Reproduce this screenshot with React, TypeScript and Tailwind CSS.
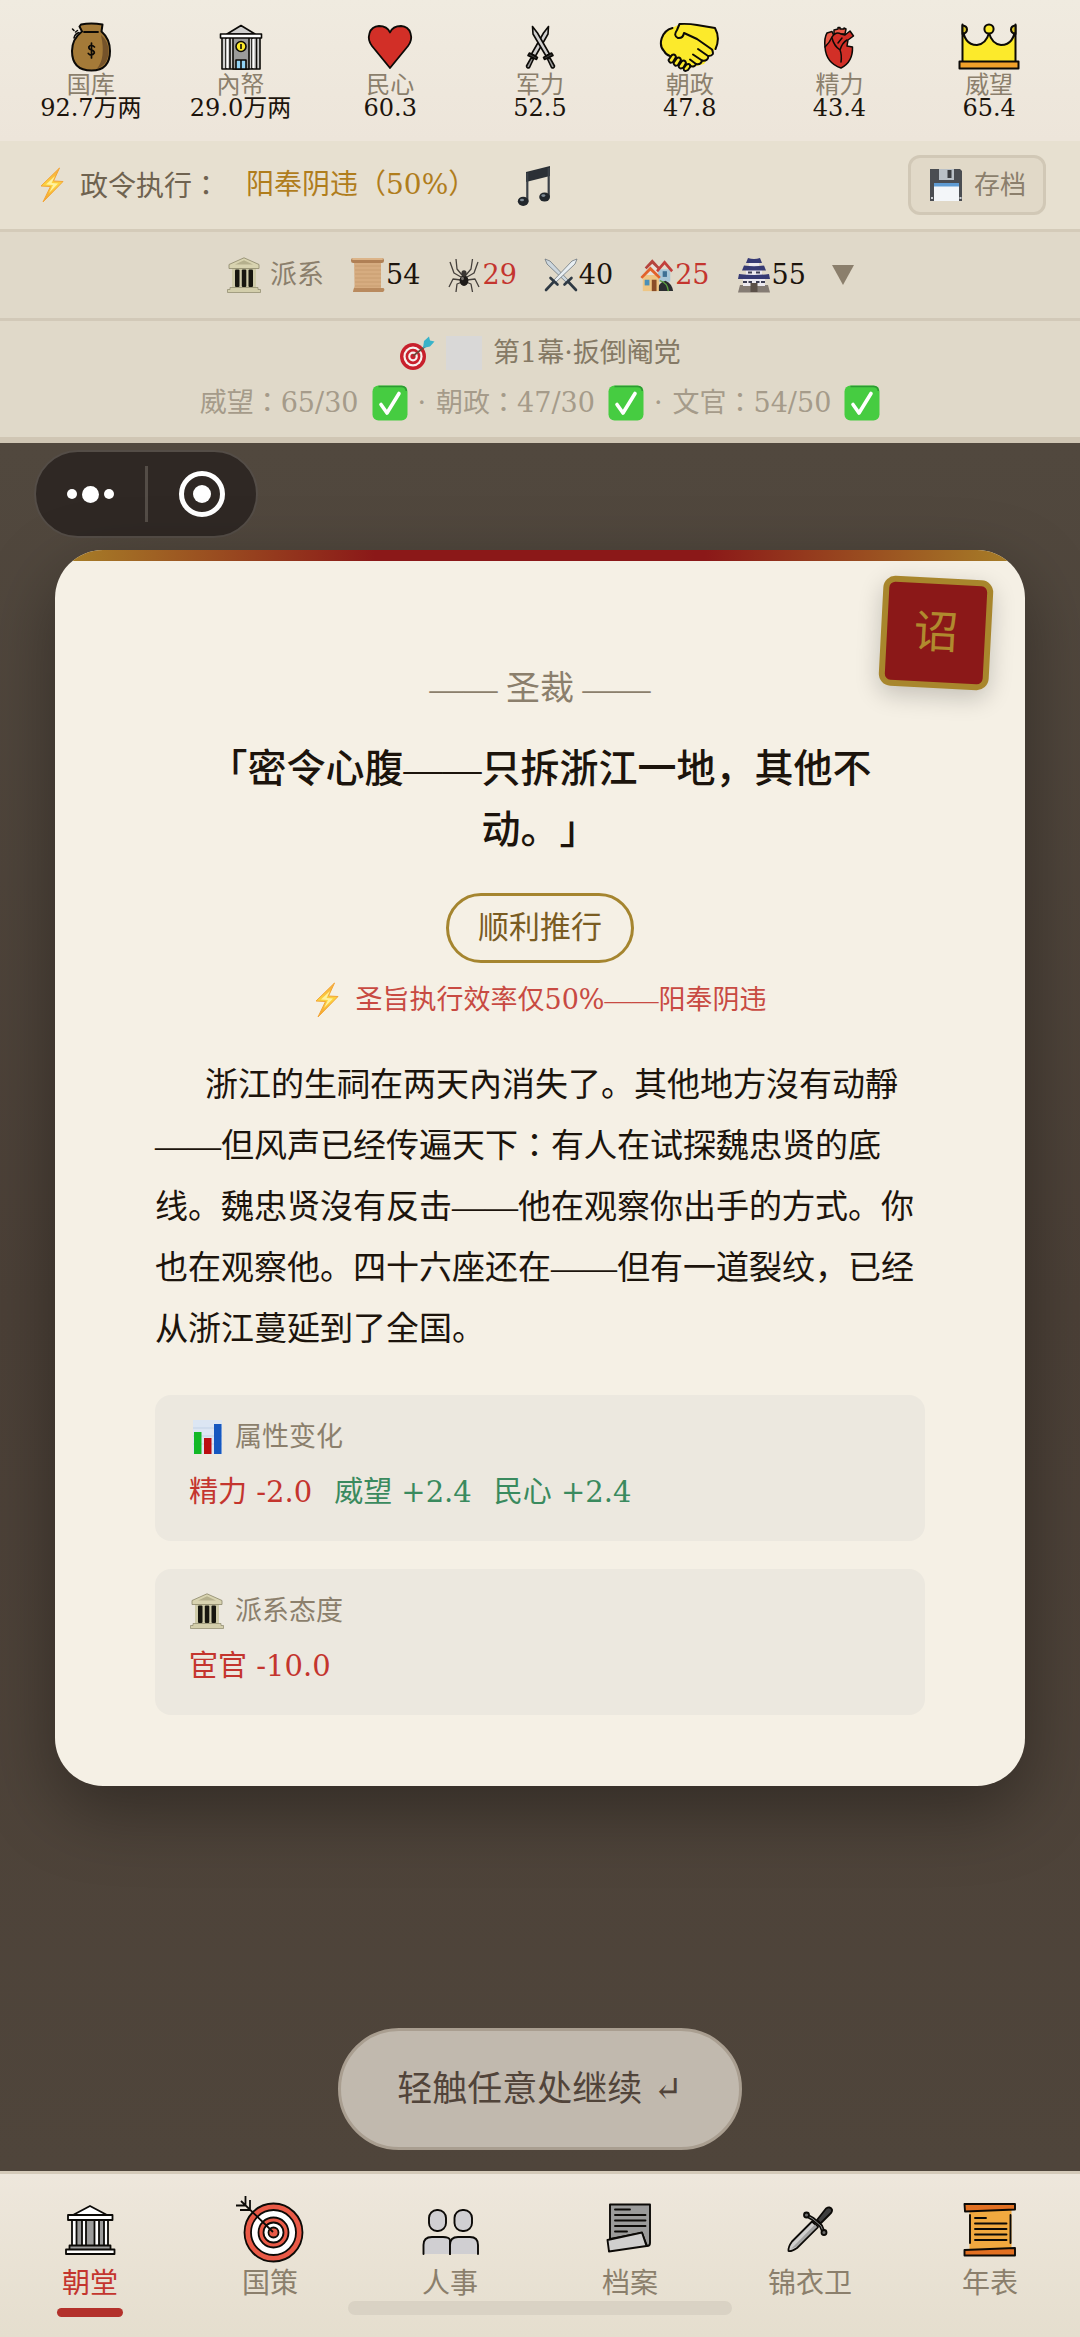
import { useState } from "react";
import type { ReactNode } from "react";

type Stat = {
  name: string;
  value: string;
  icon: ReactNode;
};

type Faction = {
  id: string;
  value: number;
  low?: boolean;
  icon: ReactNode;
};

type Goal = {
  name: string;
  progress: string;
};

type Change = {
  name: string;
  amount: string;
};

type Tab = {
  id: string;
  name: string;
  icon: ReactNode;
};

/* ---------- Emoji style icons ---------- */

function BoltIcon() {
  return (
    <svg viewBox="0 0 28 36" className="h-9 w-7 shrink-0" aria-hidden="true">
      <defs>
        <linearGradient id="bolt" x1="0" y1="0" x2="0" y2="1">
          <stop offset="0" stopColor="#f7a93b" />
          <stop offset="0.5" stopColor="#fcd53f" />
          <stop offset="1" stopColor="#f59f2c" />
        </linearGradient>
      </defs>
      <path
        d="M21.5 1 L3 19 L12.5 19.5 L5 35 L25 14.5 L15.5 14 Z"
        fill="url(#bolt)"
        stroke="#f3a536"
        strokeWidth="1"
        strokeLinejoin="round"
      />
      <path d="M17 9 L8 17.5 L15 18 L11 26 L20 16.5 L13.5 16 Z" fill="#fff2a0" />
    </svg>
  );
}

function MusicIcon() {
  return (
    <svg viewBox="0 0 36 44" className="h-11 w-9" aria-hidden="true">
      <path d="M10 9 L34 3 V13 L10 19 Z" fill="#2b3036" />
      <path d="M11.3 10 V38 M32.7 5 V34" stroke="#3b4148" strokeWidth="2.2" />
      <ellipse cx="7.2" cy="38.3" rx="5.4" ry="4.6" fill="#22272c" />
      <ellipse cx="28.6" cy="34" rx="5.4" ry="4.6" fill="#22272c" />
      <ellipse cx="6" cy="37" rx="2" ry="1.3" fill="#7e8a94" />
      <ellipse cx="27.4" cy="32.6" rx="2" ry="1.3" fill="#7e8a94" />
    </svg>
  );
}

function FloppyIcon() {
  return (
    <svg viewBox="0 0 36 36" className="size-9" aria-hidden="true">
      <path d="M2 2 H32 L34 4 V34 H2 Z" fill="#4a4d52" />
      <rect x="11" y="2" width="15" height="11" fill="#b9c0c6" />
      <rect x="19.5" y="3" width="4" height="8" fill="#3a3d41" />
      <rect x="6" y="16" width="25" height="18" fill="#f3f6f9" />
      <rect x="6" y="16" width="25" height="3.5" fill="#5e9bd3" />
      <rect x="3" y="30" width="2" height="2" fill="#c9cdd1" />
      <rect x="31.5" y="30" width="2" height="2" fill="#c9cdd1" />
    </svg>
  );
}

function TempleIcon() {
  return (
    <svg viewBox="0 0 36 36" className="size-9 shrink-0" aria-hidden="true">
      <rect x="6" y="11" width="24" height="20" fill="#cfcba9" />
      <path d="M18 0.8 L33 7.5 V11.5 H3 V7.5 Z" fill="#d8d3b0" stroke="#8b876a" strokeWidth="0.8" />
      <path d="M18 3.2 L27 7.6 H9 Z" fill="#b5b08d" />
      <rect x="9" y="12.5" width="4.5" height="17.5" rx="1" fill="#17160f" />
      <rect x="15.8" y="12.5" width="4.5" height="17.5" rx="1" fill="#17160f" />
      <rect x="22.5" y="12.5" width="4.5" height="17.5" rx="1" fill="#17160f" />
      <path d="M4 30.5 H32 V32.5 H34.5 V35.5 H1.5 V32.5 H4 Z" fill="#d3ceab" stroke="#8b876a" strokeWidth="0.7" />
    </svg>
  );
}

function ParchmentIcon() {
  return (
    <svg viewBox="0 0 36 36" className="size-9" aria-hidden="true">
      <path d="M4 3 H31 V31 L33 35 H3 L4.5 29 Z" fill="#d6ac80" />
      <path d="M5 9 H31 M5 13 H31 M5 17 H31 M5 21 H31 M5 25 H31 M5 29 H31" stroke="#c59a6d" strokeWidth="0.8" />
      <rect x="1" y="1" width="33" height="5" rx="2.2" fill="#b08055" />
      <rect x="2" y="1" width="31" height="2" rx="1" fill="#dcb488" />
      <path d="M3 35 L4 31 H33.5 Q35.5 33 33 35 Z" fill="#b98a5e" />
    </svg>
  );
}

function SpiderIcon() {
  return (
    <svg viewBox="0 0 36 36" className="size-9" aria-hidden="true">
      <g fill="none" stroke="#45403c" strokeWidth="1.3" strokeLinejoin="round">
        <path d="M16 18 L11 12 L10 2 M20 18 L25 12 L26.5 2" />
        <path d="M15 20 L8 16 L4 5 M21 20 L28 16 L32 5" />
        <path d="M15 23 L7 22 L3 30 M21 23 L29 22 L33 30" />
        <path d="M16 25 L11 27 L10 35 M20 25 L25 27 L26.5 35" />
      </g>
      <ellipse cx="18" cy="23.5" rx="4.4" ry="5.4" fill="#1d1a18" />
      <ellipse cx="18" cy="16.5" rx="2.6" ry="3.2" fill="#3a3633" />
      <ellipse cx="16.5" cy="21.5" rx="1.4" ry="1.8" fill="#77716c" />
    </svg>
  );
}

function CrossedBladesIcon() {
  return (
    <svg viewBox="0 0 36 36" className="size-9" aria-hidden="true">
      <path d="M2 2 L7 4 L26 24 L24 26 L4 7 Z" fill="#cdd7de" stroke="#6d777f" strokeWidth="0.8" />
      <path d="M34 2 L29 4 L10 24 L12 26 L32 7 Z" fill="#e8eef2" stroke="#6d777f" strokeWidth="0.8" />
      <path
        d="M21.5 27.5 L28.5 21 M25.5 25 L33 33 M14.5 27.5 L7.5 21 M10.5 25 L3 33"
        stroke="#2f3a44"
        strokeWidth="2.6"
        strokeLinecap="round"
      />
    </svg>
  );
}

function HousesIcon() {
  return (
    <svg viewBox="0 0 38 36" className="h-9 w-9" aria-hidden="true">
      <rect x="9" y="7" width="12" height="14" fill="#e6e1da" />
      <path d="M6 10 L14 1.5 L22 10 L20 12 L14 6 L8 12 Z" fill="#b5443d" />
      <rect x="20" y="12" width="13" height="13" fill="#a8c6d8" />
      <path d="M18 13 L27 2.5 L36 13 L34 15 L27 7 L20 15 Z" fill="#c23f3b" />
      <rect x="25" y="14" width="4.5" height="6" fill="#3d6f94" />
      <path d="M19 35 Q20 26 28 24 Q35 27 36 35 Z" fill="#2b2d30" />
      <path d="M22 24 Q30 26 31 35" stroke="#5aa041" strokeWidth="1.4" fill="none" />
      <rect x="4" y="18" width="17" height="17" fill="#eec685" />
      <path d="M1.5 20 L12 9 L23 20 L21 22 L12 13.5 L3.5 22 Z" fill="#e2622b" />
      <rect x="6" y="23" width="5" height="6" fill="#4a90b8" />
      <rect x="13.5" y="23" width="5" height="12" fill="#8a4d28" />
    </svg>
  );
}

function CastleIcon() {
  return (
    <svg viewBox="0 0 36 36" className="size-9" aria-hidden="true">
      <path d="M4 28 H32 L34 35.5 H2 Z" fill="#857c74" />
      <rect x="7" y="20" width="22" height="9" fill="#ece9ef" />
      <rect x="10" y="12" width="16" height="7" fill="#ece9ef" />
      <rect x="13" y="5" width="10" height="6" fill="#ece9ef" />
      <path
        d="M12 1 Q18 3 24 1 L26 6 H10 Z M8 8.5 Q18 10 28 8.5 L30 13.5 H6 Z M3 17 Q18 19 33 17 L34 22 H2 Z"
        fill="#363a74"
      />
      <path d="M7 25 H11 M12.5 25 H16 M20 25 H23.5 M25 25 H29 M12 15.5 H16 M20 15.5 H24" stroke="#3c3d52" strokeWidth="2" />
      <rect x="14.5" y="26" width="7" height="9" fill="#5b5048" />
    </svg>
  );
}

function DartboardIcon() {
  return (
    <svg viewBox="0 0 36 36" className="size-9" aria-hidden="true">
      <ellipse cx="14" cy="21.5" rx="13" ry="13.5" fill="#c8202c" />
      <ellipse cx="14" cy="21.5" rx="9.6" ry="10" fill="#f7f1ef" />
      <ellipse cx="14" cy="21.5" rx="7.4" ry="7.8" fill="#c8202c" />
      <ellipse cx="14" cy="21.5" rx="4.8" ry="5" fill="#f7f1ef" />
      <ellipse cx="14" cy="21.5" rx="2.6" ry="2.8" fill="#c8202c" />
      <path d="M14 21 L28 10" stroke="#6b4a3a" strokeWidth="1.6" />
      <path d="M24 13 L25 6 L30 1.5 L31 5.5 L35.5 6.5 L31 11.5 Z" fill="#38b3c9" />
    </svg>
  );
}

function CheckIcon() {
  return (
    <svg viewBox="0 0 36 36" className="size-9" aria-hidden="true">
      <rect x="0.5" y="0.5" width="35" height="35" rx="6" fill="#46cc41" />
      <path d="M6.5 1.5 H29.5 Q34 1.5 34.3 6" stroke="#2c9a33" strokeWidth="1.6" fill="none" />
      <path d="M9 19.5 L15 28 L27 8.5" stroke="#ffffff" strokeWidth="3.6" strokeLinecap="round" strokeLinejoin="round" fill="none" />
    </svg>
  );
}

function ChartIcon() {
  return (
    <svg viewBox="0 0 36 36" className="size-9" aria-hidden="true">
      <rect x="4" y="1" width="29" height="34" fill="#dce6f3" />
      <path d="M4 9 H33 M4 17 H33 M4 25 H33" stroke="#c3d2e6" strokeWidth="1" />
      <rect x="5" y="13" width="7.5" height="22" fill="#12b826" />
      <rect x="15" y="19" width="7.5" height="16" fill="#bb0d12" />
      <rect x="25" y="5" width="7.5" height="30" fill="#1557c0" />
    </svg>
  );
}

/* ---------- Outlined stat icons ---------- */

function MoneyBagIcon() {
  return (
    <svg viewBox="0 0 50 50" className="size-[50px]" aria-hidden="true">
      <path
        d="M15 2.5 Q25 0.5 36.5 2.5 L35.5 9.5 Q44 17 44 29 Q44 48.5 25.5 48.5 Q6 48.5 6 29 Q6 17 16 9.5 L13.5 4.5 Z"
        fill="#a47a38"
        stroke="#0c0a07"
        strokeWidth="2"
        strokeLinejoin="round"
      />
      <path d="M35 13 Q42.5 19 42.5 29 Q42.5 43 31 46.5 Q40 36 35 13 Z" fill="#75532a" />
      <path d="M18 10 H32" stroke="#0c0a07" strokeWidth="1.8" strokeLinecap="round" />
      <path d="M8 16 Q9 11.5 13 10.5 M9.5 10 L11.5 8.5 M6.5 7 L8 8.5" stroke="#0c0a07" strokeWidth="1.5" strokeLinecap="round" fill="none" />
      <path d="M28.5 25 Q25 21.5 22.8 25 Q22.8 27.5 25.5 28 Q28.5 28.7 28.3 31 Q25.5 35 22.3 31.5 M25.5 21 V36" stroke="#0c0a07" strokeWidth="1.7" strokeLinecap="round" fill="none" />
    </svg>
  );
}

function BankIcon() {
  return (
    <svg viewBox="0 0 50 50" className="size-[50px]" aria-hidden="true">
      <g stroke="#0c0a07" strokeWidth="1.6" strokeLinejoin="round">
        <rect x="6" y="15" width="38" height="32" fill="#d0cfce" />
        <rect x="17" y="15" width="16" height="32" fill="#9b9b9a" />
        <path d="M25 3.5 L39 12 H11 Z" fill="#d0cfce" />
        <rect x="4.5" y="12" width="41" height="4" fill="#ffffff" />
        <path d="M10 16 V47 M14 16 V47 M36 16 V47 M40.5 16 V47" fill="none" />
        <circle cx="25" cy="24.5" r="5" fill="#fcea2b" />
        <rect x="20" y="38" width="10" height="9" fill="#92d3f5" />
        <path d="M25 38 V47 M25 22 V27" />
      </g>
      <path d="M11.2 17 V46 M37.2 17 V46" stroke="#ffffff" strokeWidth="1.8" />
    </svg>
  );
}

function HeartIcon() {
  return (
    <svg viewBox="0 0 50 50" className="size-[50px]" aria-hidden="true">
      <path
        d="M25 46 L7 24 C1 16 4 4.5 14 4 C19.5 4 23.5 7 25 10.5 C26.5 7 30.5 4 36 4 C46 4.5 49 16 43 24 Z"
        fill="#d22f27"
        stroke="#0c0a07"
        strokeWidth="1.8"
        strokeLinejoin="round"
      />
    </svg>
  );
}

function SwordsIcon() {
  return (
    <svg viewBox="0 0 50 50" className="size-[50px]" aria-hidden="true">
      <g stroke="#0c0a07" strokeWidth="1.6" strokeLinejoin="round" strokeLinecap="round">
        <path d="M33.5 4.5 L33 12 L20.5 34 L16.5 32 L28.5 11 Z" fill="#d0cfce" />
        <path d="M14.5 31 L22.5 35.5 L21.5 37.5 L13 33.5 Z" fill="#3f3f3f" />
        <path d="M16 36 L18.5 37 L14.5 45.5 Q12 47 11.5 44 Z" fill="#9b9b9a" />
        <path d="M17.5 4.5 L18 12 L31 34 L34.5 32 L22.5 11 Z" fill="#d0cfce" />
        <path d="M36.5 31 L28.5 35.5 L29.5 37.5 L38 33.5 Z" fill="#3f3f3f" />
        <path d="M35 36 L32.5 37 L36.5 45.5 Q39 47 39.5 44 Z" fill="#9b9b9a" />
      </g>
    </svg>
  );
}

function HandshakeIcon() {
  return (
    <svg viewBox="0 0 62 50" className="h-[50px] w-[62px]" aria-hidden="true">
      <g fill="#fcea2b" stroke="#0c0a07" strokeWidth="2" strokeLinejoin="round" strokeLinecap="round">
        <path d="M13 6 C2 9 -1 23 5 29 Q7 33 11 34 L30 46 L45 42 L57 25 Q62 12 55 5 L21 2 Z" stroke="none" />
        <path d="M13.5 6 C2 9 -1 23 5 29 Q7 33 11 34" fill="none" />
        <path d="M9.5 38 L13 33 Q16 31.5 17 35 L14 40 Q10.5 42 9.5 38 Z" />
        <path d="M14.5 41 L18 36 Q21 34.5 22 38 L19 43 Q15.5 45 14.5 41 Z" />
        <path d="M19.5 44 L23 39 Q26 37.5 27 41 L24.5 45.5 Q20.5 48 19.5 44 Z" />
        <path d="M24.5 46.5 L27.5 42.5 Q31 41 31.5 44.5 L29 48 Q25 50.5 24.5 46.5 Z" />
        <path d="M21 2 L38 2.5 L56 5.5 Q62 16 57 27 L52 30 L38 16 L25 11 Q24 16 19 16 Q14 14 17 9 Z" stroke="none" />
        <path d="M31 44 Q36 45.5 37 42 Q42 43 43 38.5 Q49 39.5 49.5 34 Q56 34 53 27.5 L38 17 L25 11 Q24 16.5 19 16 Q14 14 18 8 L20.5 2 Q30 1.5 38 3 L56 6 Q61.5 16 56.5 27" fill="none" />
        <path d="M39 27 L49 34 M34 32.5 L43 38.5 M31 37.5 L37 42" fill="none" />
      </g>
    </svg>
  );
}

function OrganIcon() {
  return (
    <svg viewBox="0 0 50 50" className="size-[50px]" aria-hidden="true">
      <g stroke="#0c0a07" strokeWidth="1.5" strokeLinejoin="round" strokeLinecap="round">
        <path d="M20 8 L24 7 V5.5 H26 V7 H30 V6 L32 7 L31 12 H20 Z" fill="#ea5a47" />
        <path d="M13 11 L18 9.5 L20 14 L17 24 L11 25 Q10 16 13 11 Z" fill="#ea5a47" />
        <path d="M11 25 Q16 20 18 15 Q22 9 27 12 L31 13 L36 9 L39.5 14 L34 18 L33 24 L38.5 25 Q39 40 27 46 Q12 41 11 25 Z" fill="#d22f27" />
        <path d="M18 16 Q20 24 26 28 Q28 33 27 40 M26 28 Q28 21 33 18 M24 21 L28 16" fill="none" />
      </g>
    </svg>
  );
}

function CrownIcon() {
  return (
    <svg viewBox="0 0 62 50" className="h-[50px] w-[62px]" aria-hidden="true">
      <g stroke="#0c0a07" strokeWidth="2" strokeLinejoin="round">
        <path d="M4.5 2.5 V42 H57.5 V2.5 Q57 23 43 23 Q34 22 31 11 Q28 22 19 23 Q5 23 4.5 2.5 Z" fill="#fcea2b" />
        <circle cx="31" cy="7" r="4.6" fill="#fcea2b" />
        <path d="M4.5 3.5 Q9 4 9 7.5 Q9 11 4.5 12 Z M57.5 3.5 Q53 4 53 7.5 Q53 11 57.5 12 Z" fill="#d8c226" />
        <rect x="1.5" y="39.5" width="59" height="7" fill="#f1a12b" />
      </g>
    </svg>
  );
}

/* ---------- Tab bar icons ---------- */

function CourtIcon() {
  return (
    <svg viewBox="0 0 70 70" className="size-[70px]" aria-hidden="true">
      <g stroke="#0c0a07" strokeWidth="1.8" strokeLinejoin="round">
        <rect x="17" y="25" width="36" height="26" fill="#ffffff" />
        <rect x="21.5" y="25" width="5.5" height="26" fill="#9b9b9a" />
        <rect x="31" y="25" width="8.5" height="26" fill="#9b9b9a" />
        <rect x="44" y="25" width="5" height="26" fill="#9b9b9a" />
        <path d="M35 11 L52 20 H18 Z" fill="#ffffff" />
        <rect x="13" y="20" width="44.5" height="5" fill="#ffffff" />
        <rect x="14.5" y="50.5" width="41" height="4.5" fill="#9b9b9a" />
        <rect x="11" y="54.5" width="48.5" height="4.5" fill="#ffffff" />
      </g>
    </svg>
  );
}

function PolicyIcon() {
  return (
    <svg viewBox="0 0 70 70" className="size-[70px]" aria-hidden="true">
      <g stroke="#0c0a07" strokeWidth="1.8">
        <circle cx="38.5" cy="37.5" r="29" fill="#ea5a47" />
        <circle cx="38.5" cy="37.5" r="22.5" fill="#ffffff" />
        <circle cx="38.5" cy="37.5" r="15" fill="#ea5a47" />
        <circle cx="38.5" cy="37.5" r="10" fill="#ffffff" />
        <circle cx="38.5" cy="37.5" r="5" fill="#ea5a47" />
        <path d="M38 37 L6 6 M10.5 10.5 H1 M10.5 10.5 V1 M15 15 H5 M15 15 V5" fill="none" />
      </g>
    </svg>
  );
}

function PeopleIcon() {
  return (
    <svg viewBox="0 0 70 70" className="size-[70px]" aria-hidden="true">
      <g fill="#d0cfd2" stroke="#0c0a07" strokeWidth="1.9" strokeLinecap="round">
        <path d="M8.5 59 V50 Q8.5 42 17 42 H28 Q34 42 35 45 V59" />
        <path d="M35 59 V50 Q35 42 43 42 H55 Q63 42 63 50 V59" />
        <rect x="14" y="15" width="17" height="21" rx="8" />
        <rect x="39.5" y="15" width="17.5" height="21" rx="8" />
      </g>
    </svg>
  );
}

function ArchiveIcon() {
  return (
    <svg viewBox="0 0 70 70" className="size-[70px]" aria-hidden="true">
      <g stroke="#0c0a07" strokeWidth="1.9" strokeLinejoin="round" strokeLinecap="round">
        <path d="M15 41 V9.5 H55 V48 Q55 51 52 51 L47 38 L15 44 Z" fill="#9b9b9a" />
        <path d="M12.5 45 L47 37.5 L51.5 51 L14 56.5 Z" fill="#d0cfce" />
        <path d="M20 14.5 H35 M20 20 H50.5 M20 25.5 H50.5 M20 31 H50.5 M20 36.5 H32" fill="none" />
      </g>
    </svg>
  );
}

function DaggerIcon() {
  return (
    <svg viewBox="0 0 70 70" className="size-[70px]" aria-hidden="true">
      <g stroke="#0c0a07" strokeWidth="1.8" strokeLinejoin="round" strokeLinecap="round">
        <path d="M37 26.5 L43 32 L22 53 Q16 57 13.5 56 Q13 52 17 46.5 Z" fill="#d0cfce" />
        <path d="M40 29.5 L16 54 L22 51.5 L42 32 Z" fill="#a3a3a2" stroke="none" />
        <path d="M42 25 L51 13.5 Q55 11 57 14.5 Q57.5 17 55 19 L45.5 28.5 Z" fill="#3f3f3f" />
        <path d="M31 20 L38 24 L46 31 L48.5 37" fill="none" strokeWidth="4" />
        <path d="M32 20.5 L38 24 L46 31 L48 36" fill="none" stroke="#8a8a89" strokeWidth="1" />
        <circle cx="31.5" cy="20" r="2.5" fill="#6b6b6a" />
        <circle cx="49" cy="37.5" r="2.5" fill="#6b6b6a" />
      </g>
    </svg>
  );
}

function ChronicleIcon() {
  return (
    <svg viewBox="0 0 70 70" className="size-[70px]" aria-hidden="true">
      <rect x="14.5" y="14" width="42" height="42" fill="#f1a93f" />
      <g stroke="#0c0a07" strokeWidth="1.9" strokeLinejoin="round" strokeLinecap="round">
        <path d="M15 20 V48 M55.5 20 V48 M20 23 H31 M20 28.5 H51.5 M20 34 H51.5 M20 39.5 H51.5 M20 45 H51.5" fill="none" />
        <path d="M9.5 9 H60 V14.5 L10 16.5 Z" fill="#e27022" />
        <path d="M60 53 V60.5 H9.5 V55 Z" fill="#e27022" />
      </g>
    </svg>
  );
}

/* ---------- Data ---------- */

const stats: Stat[] = [
  { name: "国库", value: "92.7万两", icon: <MoneyBagIcon /> },
  { name: "內帑", value: "29.0万两", icon: <BankIcon /> },
  { name: "民心", value: "60.3", icon: <HeartIcon /> },
  { name: "军力", value: "52.5", icon: <SwordsIcon /> },
  { name: "朝政", value: "47.8", icon: <HandshakeIcon /> },
  { name: "精力", value: "43.4", icon: <OrganIcon /> },
  { name: "威望", value: "65.4", icon: <CrownIcon /> },
];

const factions: Faction[] = [
  { id: "civil", value: 54, icon: <ParchmentIcon /> },
  { id: "eunuch", value: 29, low: true, icon: <SpiderIcon /> },
  { id: "military", value: 40, icon: <CrossedBladesIcon /> },
  { id: "people", value: 25, low: true, icon: <HousesIcon /> },
  { id: "royal", value: 55, icon: <CastleIcon /> },
];

const goals: Goal[] = [
  { name: "威望", progress: "65/30" },
  { name: "朝政", progress: "47/30" },
  { name: "文官", progress: "54/50" },
];

const statChanges: Change[] = [
  { name: "精力", amount: "-2.0" },
  { name: "威望", amount: "+2.4" },
  { name: "民心", amount: "+2.4" },
];

const factionChanges: Change[] = [{ name: "宦官", amount: "-10.0" }];

const tabs: Tab[] = [
  { id: "court", name: "朝堂", icon: <CourtIcon /> },
  { id: "policy", name: "国策", icon: <PolicyIcon /> },
  { id: "people", name: "人事", icon: <PeopleIcon /> },
  { id: "archive", name: "档案", icon: <ArchiveIcon /> },
  { id: "guard", name: "锦衣卫", icon: <DaggerIcon /> },
  { id: "chronicle", name: "年表", icon: <ChronicleIcon /> },
];

/* ---------- Parts ---------- */

function ChangeBox({
  title,
  icon,
  changes,
}: {
  title: string;
  icon: ReactNode;
  changes: Change[];
}) {
  return (
    <section className="rounded-2xl bg-[#ece8df] px-[34px] pt-[22px] pb-6">
      <h3 className="flex h-10 items-center gap-[10px] text-[27px] text-[#8b7f6c]">
        {icon}
        {title}
      </h3>
      <ul className="mt-3 flex h-12 items-center gap-[22px] text-[29px]">
        {changes.map((change) => (
          <li
            key={change.name}
            className={
              change.amount.startsWith("+") ? "text-[#3a8a5e]" : "text-[#c4352e]"
            }
          >
            {`${change.name} ${change.amount}`}
          </li>
        ))}
      </ul>
    </section>
  );
}

function App() {
  const [activeTab, setActiveTab] = useState("court");

  return (
    <div className="flex min-h-screen flex-col bg-[#4f453b] font-['DejaVu_Serif','Noto_Sans_CJK_SC',serif] text-[#1c140c] [text-spacing-trim:space-all]">
      <header>
        {/* Stats */}
        <ul className="grid grid-cols-7 bg-linear-to-b from-[#f0ebe0] to-[#ede5da] px-4 pt-[22px] pb-[21px]">
          {stats.map((stat) => (
            <li key={stat.name} className="flex flex-col items-center text-2xl">
              {stat.icon}
              <span className="mt-[2px] leading-[22px] text-[#8b7f6c]">{stat.name}</span>
              <span className="leading-6 whitespace-nowrap">{stat.value}</span>
            </li>
          ))}
        </ul>

        {/* Decree efficiency */}
        <div className="flex h-[91px] items-center border-b-3 border-[#d4cbb9] bg-[#e7e0d0] pr-[34px] pl-[38px] text-[28px]">
          <BoltIcon />
          <span className="ml-[14px] text-[#6f6350]">
            政令执行
            <span className="font-['Noto_Sans_CJK_JP',sans-serif]">：</span>
          </span>
          <span className="ml-[26px] text-[#b07d1c]">阳奉阴违（50%）</span>
          <button type="button" aria-label="音乐" className="ml-10">
            <MusicIcon />
          </button>
          <button
            type="button"
            className="ml-auto flex h-[60px] items-center gap-[10px] rounded-xl border-3 border-[#d1c8b6] bg-[#e1d9c8] px-[17px] text-[26px] text-[#8b7f6c]"
          >
            <FloppyIcon />
            存档
          </button>
        </div>

        {/* Factions */}
        <button
          type="button"
          className="flex h-[89px] w-full items-center justify-center gap-[26px] border-b-3 border-[#d2c9b8] bg-[#e0d9c9] text-[27px]"
        >
          <span className="flex items-center gap-2 text-[#8b7f6c]">
            <TempleIcon />
            派系
          </span>
          {factions.map((faction) => (
            <span
              key={faction.id}
              className={
                faction.low ? "flex items-center text-[#c4352e]" : "flex items-center"
              }
            >
              {faction.icon}
              {faction.value}
            </span>
          ))}
          <svg viewBox="0 0 22 20" className="h-5 w-[22px]" aria-hidden="true">
            <path d="M0 0 H22 L11 20 Z" fill="#8b7f6c" />
          </svg>
        </button>

        {/* Chapter goals */}
        <div className="flex flex-col items-center border-b-6 border-[#d0c6b4] bg-[#e0d9c9] pt-2 pb-[10px] text-[27px]">
          <h1 className="flex h-12 items-center gap-[11px] text-[#857965]">
            <DartboardIcon />
            <span className="h-[34px] w-9 bg-[#d9d8d7]" />
            第1幕·扳倒阉党
          </h1>
          <ul className="mt-[2px] flex h-12 items-center gap-[10px] font-['DejaVu_Serif','Noto_Sans_CJK_JP',serif] text-[#a59b8a]">
            {goals.map((goal, index) => (
              <li key={goal.name} className="flex items-center">
                {index > 0 && <span className="mr-[10px]">·</span>}
                <span className="mr-[13px]">{`${goal.name}：${goal.progress}`}</span>
                <CheckIcon />
              </li>
            ))}
          </ul>
        </div>
      </header>

      <main className="flex flex-1 flex-col bg-linear-to-b from-[#51483e] via-[#4b4037] to-[#4f453b]">
        {/* Host menu */}
        <div className="mt-[7px] ml-[34px] flex h-[88px] w-56 items-center rounded-full border-2 border-[#544d47] bg-[#2f2824]">
          <button type="button" aria-label="更多" className="flex flex-1 items-center justify-center gap-[5px]">
            <span className="size-[10px] rounded-full bg-white" />
            <span className="size-[17px] rounded-full bg-white" />
            <span className="size-[10px] rounded-full bg-white" />
          </button>
          <span className="h-14 w-[3px] bg-[#544d47]" />
          <button type="button" aria-label="关闭" className="flex flex-1 items-center justify-center">
            <span className="flex size-[46px] items-center justify-center rounded-full border-5 border-white">
              <span className="size-[18px] rounded-full bg-white" />
            </span>
          </button>
        </div>

        {/* Edict result */}
        <article className="relative mx-[55px] mt-3 overflow-hidden rounded-[48px] bg-[#f5f0e5] pb-[71px] shadow-[0_24px_70px_rgba(0,0,0,0.35)]">
          <div className="h-[11px] bg-[linear-gradient(90deg,#a88228,#8b1818_33%,#8b1818_67%,#a88228)]" />
          <div className="absolute top-7 right-[34px] flex size-[110px] rotate-3 items-center justify-center rounded-xl border-6 border-[#a8862c] bg-[#8b1818] text-[45px] text-[#b08a2e] shadow-[0_8px_24px_rgba(0,0,0,0.2)]">
            诏
          </div>

          <div className="mt-[103px] flex flex-col items-center px-[100px] text-center font-['Liberation_Serif','Noto_Sans_CJK_SC',serif]">
            <p className="text-[34px] leading-[50px] text-[#8b7f6c]">—— 圣裁 ——</p>
            <h2 className="mt-6 px-7 text-[39px] leading-[61px] font-medium">
              「密令心腹——只拆浙江一地，其他不动。」
            </h2>
            <span className="mt-[33px] flex h-[70px] items-center rounded-full border-3 border-[#a5852f] px-[29px] text-[31px] text-[#7a5c22]">
              顺利推行
            </span>
            <p className="mt-[17px] flex h-10 items-center gap-[14px] text-[27px] text-[#c84a42]">
              <BoltIcon />
              <span>
                圣旨执行效率仅
                <span className="font-['DejaVu_Serif',serif]">50%</span>
                ——阳奉阴违
              </span>
            </p>
          </div>

          <p className="mx-[100px] mt-[35px] indent-[50px] font-['Liberation_Serif','Noto_Sans_CJK_JP',serif] text-[33px] leading-[61px]">
            浙江的生祠在两天內消失了。其他地方沒有动靜——但风声已经传遍天下：有人在试探魏忠贤的底线。魏忠贤沒有反击——他在观察你出手的方式。你也在观察他。四十六座还在——但有一道裂纹，已经从浙江蔓延到了全国。
          </p>

          <div className="mx-[100px] mt-[35px] flex flex-col gap-7">
            <ChangeBox title="属性变化" icon={<ChartIcon />} changes={statChanges} />
            <ChangeBox title="派系态度" icon={<TempleIcon />} changes={factionChanges} />
          </div>
        </article>

        <button
          type="button"
          className="mx-auto mt-auto mb-[21px] h-[122px] rounded-full border-3 border-[#a99e90] bg-[#c1b9ae] px-14 text-[35px] text-[#51443a]"
        >
          轻触任意处继续 ↵
        </button>
      </main>

      {/* Tab bar */}
      <nav className="relative grid grid-cols-6 border-t-3 border-[#d4cab9] bg-linear-to-b from-[#eee7dc] to-[#e5dece] pt-[21px] pb-5">
        <div className="absolute bottom-[22px] left-1/2 h-[14px] w-96 -translate-x-1/2 rounded-full bg-[#d9d2c4]" />
        {tabs.map((tab) => (
          <button
            key={tab.id}
            type="button"
            onClick={() => setActiveTab(tab.id)}
            className="relative flex flex-col items-center text-[28px] text-[#8b7f6c]"
          >
            {tab.icon}
            <span
              className={
                tab.id === activeTab
                  ? "mt-[2px] leading-[34px] text-[#c4352e]"
                  : "mt-[2px] leading-[34px]"
              }
            >
              {tab.name}
            </span>
            <span
              className={
                tab.id === activeTab
                  ? "mt-[7px] h-[9px] w-[66px] rounded-full bg-[#b3312b]"
                  : "mt-[7px] h-[9px] w-[66px]"
              }
            />
          </button>
        ))}
      </nav>
    </div>
  );
}

export default App;
